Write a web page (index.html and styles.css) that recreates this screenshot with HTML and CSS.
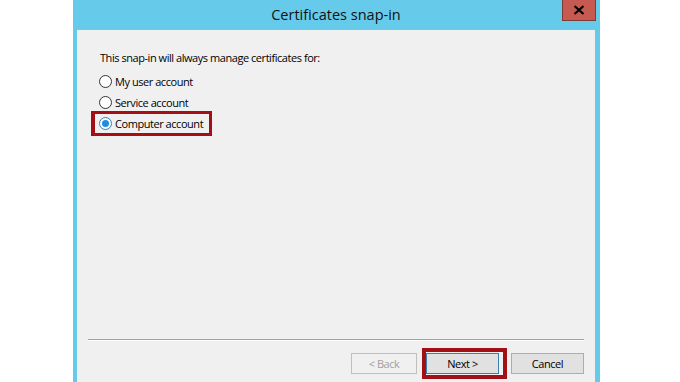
FILE: index.html
```html
<!DOCTYPE html>
<html lang="en">
<head>
    <meta charset="UTF-8">
    <title>Certificates snap-in</title>
    <link rel="stylesheet" href="styles.css">
</head>
<body>
    <div class="window">
        <div class="titlebar">
            <span class="title">Certificates snap-in</span>
            <button type="button" class="close-btn">
                <svg width="12" height="10" viewBox="0 0 12 10">
                    <path d="M1.5 1 L10.5 9 M10.5 1 L1.5 9" stroke="#000" stroke-width="2.2"/>
                </svg>
            </button>
        </div>
        <div class="content">
            <p class="prompt">This snap-in will always manage certificates for:</p>
            <div class="options">
                <label class="option"><span class="radio"></span>My user account</label>
                <label class="option"><span class="radio"></span>Service account</label>
                <label class="option highlight"><span class="radio checked"></span>Computer account</label>
            </div>
            <div class="footer">
                <div class="separator"></div>
                <div class="buttons">
                    <button type="button" class="btn disabled">&lt; Back</button>
                    <span class="btn-highlight">
                        <button type="button" class="btn default">Next &gt;</button>
                    </span>
                    <button type="button" class="btn">Cancel</button>
                </div>
            </div>
        </div>
    </div>
</body>
</html>
```

FILE: styles.css
```css
body {
    margin: 0;
    background-color: #ffffff;
    font-family: "Open Sans", "Noto Sans", sans-serif;
    font-size: 11px;
    letter-spacing: -0.45px;
    color: #000;
    overflow: hidden;
}

.window {
    margin-left: 73px;
    width: 527px;
    height: 382px;
    background-color: #66cbea;
    padding: 0 5px 0 4px;
    box-sizing: border-box;
    display: flex;
    flex-direction: column;
}

.titlebar {
    height: 29px;
    display: flex;
    justify-content: center;
    align-items: center;
    position: relative;
}

.title {
    font-size: 14.5px;
    letter-spacing: 0;
    color: #111;
    margin-top: -1px;
}

.close-btn {
    position: absolute;
    top: 0;
    right: -1px;
    width: 34px;
    height: 21px;
    padding: 0;
    background-color: #c75a50;
    border: 1px solid #7e3b36;
    border-top: none;
    display: flex;
    justify-content: center;
    align-items: center;
}

.content {
    flex: 1;
    background-color: #f0f0f0;
    border-top: 1px solid #9fb8c2;
    display: flex;
    flex-direction: column;
    padding: 20px 0 0 23px;
}

.prompt {
    margin: 0;
    height: 16px;
    line-height: 16px;
}

.options {
    margin-top: 5px;
    display: flex;
    flex-direction: column;
    align-items: flex-start;
}

.option {
    height: 21px;
    display: flex;
    align-items: center;
}

.radio {
    width: 11px;
    height: 11px;
    border: 1px solid #333;
    border-radius: 50%;
    background-color: #fff;
    margin: 0 3px 0 -1px;
    display: flex;
    justify-content: center;
    align-items: center;
}

.radio.checked {
    border-color: #3c7fb1;
}

.radio.checked::after {
    content: "";
    width: 7px;
    height: 7px;
    border-radius: 50%;
    background-color: #1f8de0;
}

.option.highlight {
    height: 19px;
    border: 3px solid #a30f16;
    margin: -2px 0 0 -9px;
    padding: 0 6px 0 5px;
    border-left-width: 4px;
}

.footer {
    margin-top: auto;
    margin-left: -12px;
    padding-right: 11px;
}

.separator {
    height: 1px;
    background-color: #a0a0a0;
    border-bottom: 1px solid #ffffff;
}

.buttons {
    display: flex;
    justify-content: flex-end;
    align-items: flex-start;
    height: 41px;
    padding-top: 7px;
    box-sizing: border-box;
}

.btn {
    font-family: inherit;
    font-size: 11px;
    letter-spacing: -0.45px;
    width: 66px;
    height: 21px;
    margin-top: 5px;
    padding: 0;
    background-color: #e1e1e1;
    border: 1px solid #adadad;
    color: #000;
}

.btn.disabled {
    background-color: #f0f0f0;
    border-color: #bfbfbf;
    color: #a0a0a0;
    margin-right: 5px;
}

.btn.default {
    width: 73px;
    margin-top: 0;
    border-color: #3c7fb1;
}

.btn-highlight {
    display: flex;
    border: 4px solid #a30f16;
    padding: 1px 4px 1px 0;
    margin-right: 4px;
}

.btn:last-child {
    width: 73px;
}
```
